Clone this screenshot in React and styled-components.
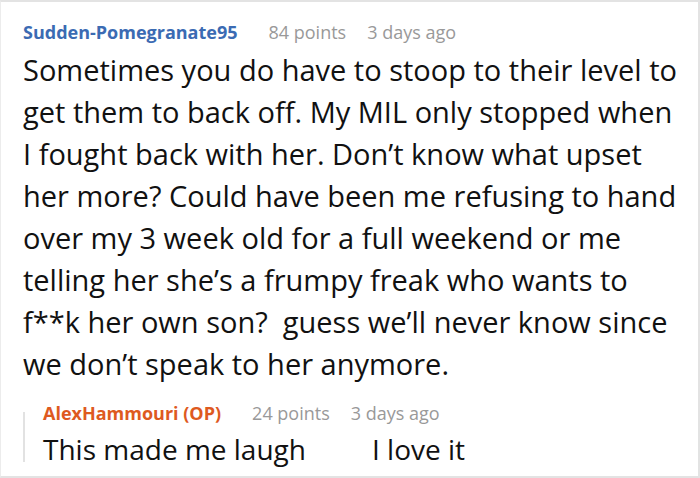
import React from "react";
import styled, { createGlobalStyle } from "styled-components";

const GlobalStyle = createGlobalStyle`
    html, body {
        margin: 0;
        padding: 0;
        background: #fff;
    }
    body {
        font-family: "Open Sans", "Noto Sans", sans-serif;
    }
`;

const comment = {
    author: "Sudden-Pomegranate95",
    points: "84 points",
    time: "3 days ago",
    lines: [
        "Sometimes you do have to stoop to their level to",
        "get them to back off. My MIL only stopped when",
        "I fought back with her. Don\u2019t know what upset",
        "her more? Could have been me refusing to hand",
        "over my 3 week old for a full weekend or me",
        "telling her she\u2019s a frumpy freak who wants to",
        "f**k her own son?  guess we\u2019ll never know since",
        "we don\u2019t speak to her anymore.",
    ],
};

const reply = {
    author: "AlexHammouri (OP)",
    points: "24 points",
    time: "3 days ago",
};

const App = () => {
    return (
        <>
            <GlobalStyle />
            <Frame>
                <Header>
                    <Author>{comment.author}</Author>
                    <Meta>{comment.points}</Meta>
                    <Meta>{comment.time}</Meta>
                </Header>
                <Body>
                    {comment.lines.map((l, i) => (
                        <Line key={i}>{l}</Line>
                    ))}
                </Body>
                <Reply>
                    <Header $reply>
                        <Author $op>{reply.author}</Author>
                        <Meta>{reply.points}</Meta>
                        <Meta>{reply.time}</Meta>
                    </Header>
                    <Body $reply>
                        <Line>
                            This made me laugh<Spacer />I love it
                        </Line>
                    </Body>
                </Reply>
            </Frame>
        </>
    );
};

const Frame = styled.div`
    box-sizing: border-box;
    width: 700px;
    height: 478px;
    padding: 18px 0 0 22px;

    border: 2px solid #e3e3e3;
    border-left: 1px solid #ececec;
    overflow: hidden;
    background: #fff;
`;

const Header = styled.div`
    display: flex;
    align-items: baseline;
    gap: 21px;

    height: 24px;
    line-height: 24px;
    margin-bottom: ${(p) => (p.$reply ? "3px" : "5px")};
    font-size: 18px;
`;

const Author = styled.span`
    margin-right: 10px;
    font-weight: 700;
    color: ${(p) => (p.$op ? "#de5a1f" : "#3b6bb3")};
`;

const Meta = styled.span`
    color: #999;
`;

const Body = styled.div`
    font-size: ${(p) => (p.$reply ? "28px" : "29px")};
    line-height: 42px;
    color: #111;
`;

const Line = styled.div`
    white-space: pre;
`;

const Spacer = styled.span`
    display: inline-block;
    width: 66px;
`;

const Reply = styled.div`
    position: relative;
    margin-top: 16px;
    padding-left: 20px;

    &::before {
        content: "";
        position: absolute;
        left: 0;
        top: 11px;
        bottom: 8px;
        width: 2px;
        background: #e2e2e2;
    }
`;

export default App;
